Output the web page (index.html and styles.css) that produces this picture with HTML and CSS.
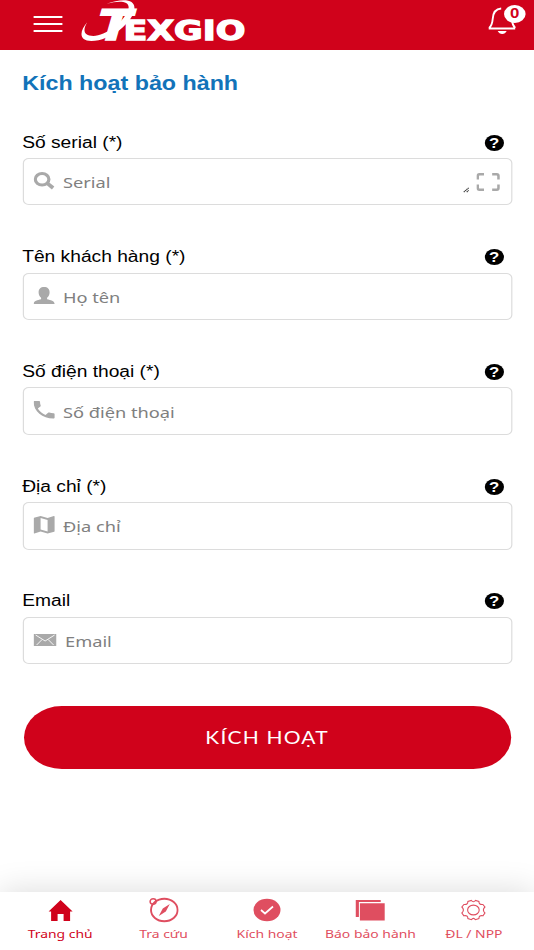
FILE: index.html
```
<!DOCTYPE html>
<html lang="vi">
<head>
    <meta charset="UTF-8">
    <meta name="viewport" content="width=device-width, initial-scale=1.0">
    <title>Kích hoạt bảo hành</title>
    <link rel="stylesheet" href="styles.css">
</head>
<body>
<div class="page">
    <header class="header">
        <button class="menu-btn" aria-label="Menu"><span></span><span></span><span></span></button>
        <svg class="logo" viewBox="0 0 168 49" preserveAspectRatio="none">
            <text class="logo-t" transform="translate(13 40) skewX(-16)" textLength="34" lengthAdjust="spacingAndGlyphs">T</text>
            <text class="logo-text" x="43" y="40" textLength="122" lengthAdjust="spacingAndGlyphs">EXGIO</text>
            <path d="M7 22C-1 31-2 41 11 41C30 41 53 22 54 9C55-1 42-2 26 4C39 0 50 1 48 9C44 22 25 36 13 36C3 36 2 30 7 22Z" fill="#fff"/>
        </svg>
        <div class="bell">
            <svg width="25" height="29" viewBox="0 0 30 29" preserveAspectRatio="none">
                <path d="M1.500 22.500H28M2 22Q5 19 5.500 13Q6 3 14 2.500M25 14Q25 19 28 22" fill="none" stroke="#fff" stroke-width="1.900"/>
                <path d="M10.500 25H19.500Q18 28 15 28Q12 28 10.500 25Z" fill="#fff"/>
            </svg>
            <span class="badge">0</span>
        </div>
    </header>

    <main class="content">
        <h1>Kích hoạt bảo hành</h1>

        <div class="form-group">
            <div class="label-row"><label for="serial">Số serial (*)</label><span class="help">?</span></div>
            <div class="field">
                <svg class="icon" viewBox="0 0 21 18" preserveAspectRatio="none">
                    <ellipse cx="8.500" cy="7.500" rx="6.800" ry="5.900" fill="none" stroke="#a9a9a9" stroke-width="3.200"/>
                    <path d="M13.500 11.500L19.500 16.500" stroke="#a9a9a9" stroke-width="3.800"/>
                </svg>
                <input id="serial" type="text" placeholder="Serial">
                <svg class="grip" viewBox="0 0 6 6"><path d="M.5 5.500L5.500.5M3.500 5.500L5.500 3.500" stroke="#444" stroke-width="1.300" stroke-dasharray="1.500 .4"/></svg>
                <svg class="scan" viewBox="0 0 23 18" preserveAspectRatio="none">
                    <path d="M1.300 6.500V3Q1.300 1.300 3 1.300H7.500M15.500 1.300H20Q21.700 1.300 21.700 3V6.500M21.700 11.500V15Q21.700 16.700 20 16.700H15.500M7.500 16.700H3Q1.300 16.700 1.300 15V11.500" fill="none" stroke="#a9a9a9" stroke-width="2.500"/>
                </svg>
            </div>
        </div>

        <div class="form-group">
            <div class="label-row"><label for="name">Tên khách hàng (*)</label><span class="help">?</span></div>
            <div class="field">
                <svg class="icon" viewBox="0 0 21 18" preserveAspectRatio="none">
                    <path d="M10.500 0C14 0 16 2 16 5.500C16 8 15 10 13.500 11V12.500C17 13.500 21 14 21 17.500H0C0 14 4 13.500 7.500 12.500V11C6 10 5 8 5 5.500C5 2 7 0 10.500 0Z" fill="#a9a9a9"/>
                </svg>
                <input id="name" type="text" placeholder="Họ tên">
            </div>
        </div>

        <div class="form-group">
            <div class="label-row"><label for="phone">Số điện thoại (*)</label><span class="help">?</span></div>
            <div class="field">
                <svg class="icon" viewBox="3 3 18 18" preserveAspectRatio="none">
                    <path d="M6.620 10.790c1.440 2.830 3.760 5.140 6.590 6.590l2.200-2.200c.27-.27.67-.36 1.020-.24 1.120.37 2.330.57 3.570.57.55 0 1 .45 1 1V20c0 .55-.45 1-1 1-9.390 0-17-7.610-17-17 0-.55.45-1 1-1h3.500c.55 0 1 .45 1 1 0 1.250.2 2.450.57 3.570.11.35.03.74-.25 1.020l-2.200 2.200z" fill="#a9a9a9"/>
                </svg>
                <input id="phone" type="text" placeholder="Số điện thoại">
            </div>
        </div>

        <div class="form-group">
            <div class="label-row"><label for="address">Địa chỉ (*)</label><span class="help">?</span></div>
            <div class="field">
                <svg class="icon" viewBox="3 3 18 18" preserveAspectRatio="none">
                    <path d="M20.500 3l-.16.03L15 5.100 9 3 3.360 4.900c-.21.07-.36.25-.36.48V20.500c0 .28.22.5.5.5l.16-.03L9 18.900l6 2.100 5.640-1.900c.21-.07.36-.25.36-.48V3.500c0-.28-.22-.5-.5-.5zM15 19l-6-2.110V5l6 2.110V19z" fill="#a9a9a9"/>
                </svg>
                <input id="address" type="text" placeholder="Địa chỉ">
            </div>
        </div>

        <div class="form-group">
            <div class="label-row"><label for="email">Email</label><span class="help">?</span></div>
            <div class="field">
                <svg class="icon icon-mail" viewBox="0 0 23 12" preserveAspectRatio="none">
                    <path d="M0 0H23V12H0Z" fill="#a9a9a9"/>
                    <path d="M2 1L11.500 7L21 1M3 11L8.500 5.500M20 11L14.500 5.500" fill="none" stroke="#fff" stroke-width=".9"/>
                </svg>
                <input id="email" type="text" placeholder="Email">
            </div>
        </div>

        <button class="submit-btn">KÍCH HOẠT</button>
    </main>

    <nav class="bottom-nav">
        <a class="nav-item active">
            <svg viewBox="0 0 30 26" preserveAspectRatio="none"><path d="M15 3L27 14.500H24.500V24H18V17H12V24H5.500V14.500H3Z" fill="#d0021b"/></svg>
            <span>Trang chủ</span>
        </a>
        <a class="nav-item">
            <svg viewBox="0 0 30 26" preserveAspectRatio="none">
                <ellipse cx="15.500" cy="13" rx="13.300" ry="11.200" fill="none" stroke="#df4e60" stroke-width="1.900"/>
                <ellipse cx="4.300" cy="4.500" rx="3" ry="2.700" fill="none" stroke="#df4e60" stroke-width="1.500"/>
                <path d="M21 7L17 14.500L10 19L14 11.500Z" fill="#df4e60"/>
            </svg>
            <span>Tra cứu</span>
        </a>
        <a class="nav-item">
            <svg viewBox="0 0 30 26" preserveAspectRatio="none">
                <ellipse cx="15" cy="13" rx="13.500" ry="11.300" fill="#df4e60"/>
                <path d="M9 13L13 16.500L21 9.500" fill="none" stroke="#fff" stroke-width="1.700"/>
            </svg>
            <span>Kích hoạt</span>
        </a>
        <a class="nav-item">
            <svg viewBox="0 0 30 26" preserveAspectRatio="none">
                <path d="M.5 3H25.500V5H3.700V20H.5Z" fill="#df4e60"/>
                <path d="M4.700 6.200H29.500V23.500H4.700Z" fill="#df4e60"/>
            </svg>
            <span>Báo bảo hành</span>
        </a>
        <a class="nav-item">
            <svg viewBox="0 0 30 26" preserveAspectRatio="none">
                <path d="M13 3.500Q15 6 17 3.500L20.500 4.500Q20.500 8 24.500 7.500L26.500 10Q23.500 13 26.500 16L24.500 18.800Q20.500 18 20.500 21.500L17 22.700Q15 20 13 22.700L9.500 21.500Q9.500 18 5.500 18.800L3.500 16Q6.500 13 3.500 10L5.500 7.500Q9.500 8 9.500 4.500Z" fill="none" stroke="#df4e60" stroke-width="1.100"/>
                <ellipse cx="15" cy="13" rx="5.800" ry="4.900" fill="none" stroke="#df4e60" stroke-width="1.100"/>
            </svg>
            <span>ĐL / NPP</span>
        </a>
    </nav>
</div>
</body>
</html>
```
FILE: styles.css
```
* {
    box-sizing: border-box;
}

body {
    margin: 0;
    background-color: #fff;
    overflow: hidden;
}

/* 445px layout stretched to the full width */
.page {
    width: 445px;
    height: 950px;
    display: flex;
    flex-direction: column;
    transform: scaleX(1.2);
    transform-origin: 0 0;
    font-family: "Liberation Sans", Arial, sans-serif;
    overflow: hidden;
}

.header {
    height: 49.6px;
    flex: none;
    display: flex;
    align-items: flex-start;
    padding: 0 14px 0 28px;
    background-color: #d0021b;
}

.menu-btn {
    display: flex;
    flex-direction: column;
    gap: 5px;
    width: 24px;
    margin-top: 16px;
    padding: 0;
    border: none;
    background: none;
}

.menu-btn span {
    height: 2px;
    width: 24px;
    background-color: #fff;
}

.logo {
    width: 140px;
    height: 49px;
    margin-left: 15px;
    overflow: visible;
}

.logo text {
    font-family: "DejaVu Sans", sans-serif;
    font-weight: bold;
    fill: #fff;
    stroke: #fff;
}

.logo-t {
    font-size: 42px;
    stroke-width: 1.5px;
}

.logo-text {
    font-size: 26px;
    stroke-width: 1.3px;
}

.bell {
    position: relative;
    width: 25px;
    height: 29px;
    margin: 6px 0 0 auto;
}

.bell svg {
    display: block;
}

.badge {
    position: absolute;
    top: -1px;
    right: -7px;
    width: 18px;
    height: 18px;
    border-radius: 50%;
    background-color: #fff;
    color: #d0021b;
    font-size: 14px;
    font-weight: bold;
    line-height: 17px;
    text-align: center;
}

.content {
    flex: 1;
    padding: 21px 18.3px 0 18.5px;
}

h1 {
    margin: 0 0 36px;
    font-size: 19.4px;
    line-height: 24px;
    color: #1273b9;
}

.form-group {
    margin-bottom: 39.8px;
}

.label-row {
    display: flex;
    align-items: center;
    justify-content: space-between;
    height: 24px;
    margin-bottom: 3.5px;
    padding-right: 7px;
    font-size: 16px;
    color: #000;
}

.help {
    width: 16px;
    height: 16px;
    border-radius: 50%;
    background-color: #000;
    color: #fff;
    font-size: 14px;
    font-weight: bold;
    line-height: 16px;
    text-align: center;
}

.field {
    display: flex;
    align-items: center;
    height: 47.4px;
    padding: 0 9px 0 8.8px;
    border: 1px solid #dcdcdc;
    border-radius: 5px;
}

.icon {
    flex: none;
    width: 17.5px;
    height: 17.5px;
    margin: 0 6.7px 2px 0;
}

.icon-mail {
    width: 19.2px;
    height: 12px;
}

.field input {
    flex: 1;
    min-width: 0;
    height: 30px;
    padding: 1px 0 0;
    border: none;
    outline: none;
    background: none;
    font-family: "Noto Sans", "Open Sans", sans-serif;
    font-size: 15.2px;
}

.field input::placeholder {
    color: #808080;
}

.grip {
    width: 5px;
    height: 6px;
    margin: 17px 6px 0 0;
}

.scan {
    width: 19.5px;
    height: 18px;
}

.submit-btn {
    display: block;
    width: 406px;
    height: 63px;
    margin: 41.7px auto 0;
    padding: 0;
    border: none;
    border-radius: 32px;
    background-color: #d0021b;
    color: #fff;
    font-family: Lato, sans-serif;
    font-size: 17.5px;
    letter-spacing: 1px;
}

.bottom-nav {
    display: flex;
    flex: none;
    height: 58.4px;
    padding: 5px 7px 0;
    background-color: #fff;
    box-shadow: 0 0 30px rgba(0, 0, 0, 0.15);
}

.nav-item {
    flex: 1;
    display: flex;
    flex-direction: column;
    align-items: center;
    color: #df4e60;
    font-family: "Noto Sans", "Open Sans", sans-serif;
    font-size: 11.6px;
    line-height: 18px;
    white-space: nowrap;
}

.nav-item svg {
    width: 25px;
    height: 26px;
    margin-bottom: 2.6px;
}

.nav-item.active {
    color: #d0021b;
}
```
